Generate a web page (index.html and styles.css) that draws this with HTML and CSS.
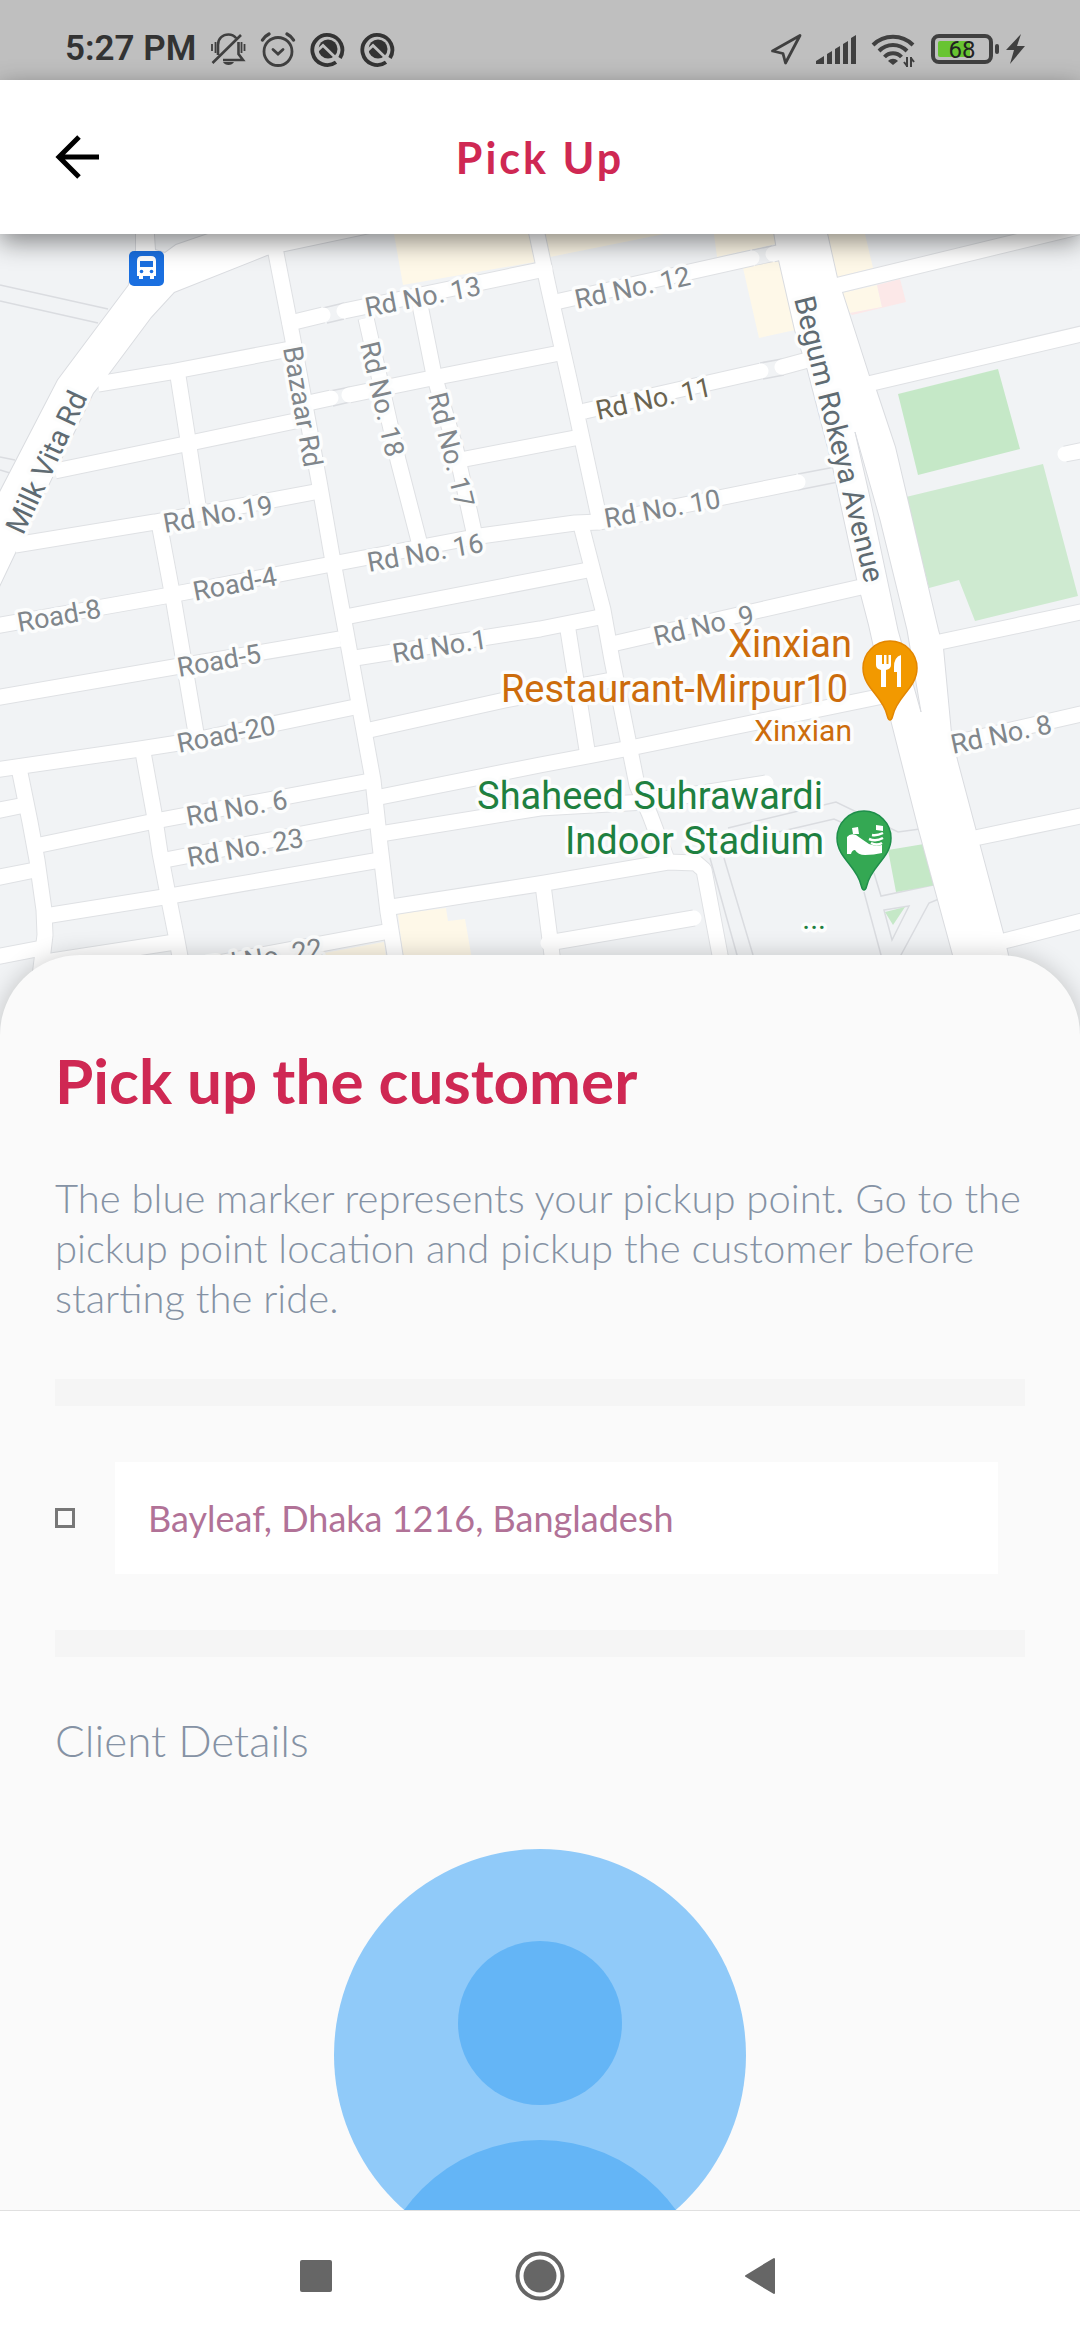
FILE: index.html
```html
<!DOCTYPE html>
<html lang="en">
<head>
<meta charset="utf-8">
<meta name="viewport" content="width=device-width">
<title>Pick Up</title>
<link rel="stylesheet" href="styles.css">
</head>
<body>
<div class="screen">
  <div class="status-bar">
    <div class="status-group">
      <span class="clock">5:27 PM</span>
      <svg class="status-icon" width="36" height="36" viewBox="0 0 36 36" fill="none" stroke="#404040" stroke-width="2.6">
        <path d="M8 24V14C8 7 13 3.500 18.500 3.500C21 3.500 24 4.500 26 7M28.500 11V23L33 29H13M31 4L2.500 32"/>
        <path d="M2 13v7M5.500 11v11M31.500 11v11M34.500 13v7" stroke-width="1.800"/>
        <path d="M13 31h11c-2 4-9 4-11 0z" fill="#404040" stroke="none"/>
      </svg>
      <svg class="status-icon" width="36" height="36" viewBox="0 0 36 36" fill="none" stroke="#404040" stroke-width="2.8" stroke-linecap="round">
        <circle cx="18" cy="20.500" r="14"/>
        <path d="M13 18.500l5 4.500l5-4.500"/>
        <path d="M2.500 9C4 6.500 6 4.500 9 3M33.500 9C32 6.500 30 4.500 27 3" stroke-width="3.400"/>
      </svg>
      <svg class="status-icon" width="36" height="36" viewBox="0 0 36 36">
        <path d="M26 31.200A15 15 0 1 1 30 27" fill="none" stroke="#333" stroke-width="3.800"/>
        <circle cx="18" cy="18" r="9.500" fill="#333"/>
        <path d="M7 20L13 14.500L29 30" fill="none" stroke="#bfbfbf" stroke-width="2.800"/>
      </svg>
      <svg class="status-icon" width="36" height="36" viewBox="0 0 36 36">
        <path d="M26 31.200A15 15 0 1 1 30 27" fill="none" stroke="#333" stroke-width="3.800"/>
        <circle cx="18" cy="18" r="9.500" fill="#333"/>
        <path d="M7 20L13 14.500L29 30" fill="none" stroke="#bfbfbf" stroke-width="2.800"/>
      </svg>
    </div>
    <div class="status-group">
      <svg width="32" height="36" viewBox="0 0 32 36" fill="none" stroke="#404040" stroke-width="2.800" stroke-linejoin="round">
        <path d="M30 4.500L2.500 20L13 22.500L15.500 32z"/>
      </svg>
      <svg width="41" height="36" viewBox="0 0 41 36" fill="#404040">
        <path d="M0 33v-3l8-5v8zM11 33V23l5-3v13zM19 33V18l5-3v18zM27 33V13l5-3v23zM35 33V7l5-3v29z"/>
      </svg>
      <svg width="44" height="36" viewBox="0 0 44 36" fill="none" stroke="#404040" stroke-width="4">
        <path d="M2 14C13 3 31 3 42 14M8 20C16 12 28 12 36 20M13.500 26C18 21 26 21 30.500 26"/>
        <path d="M17 30c3-3 7-3 10 0l-5 4z" fill="#404040" stroke="none"/>
        <path d="M36 26v10M40 26v10M33 31l3 4M43 31l-3-4" stroke-width="2"/>
      </svg>
      <div class="battery">
        <span class="battery-case"><span class="battery-level">68</span></span>
        <span class="battery-nub"></span>
        <svg width="20" height="32" viewBox="0 0 20 32" fill="#404040"><path d="M15 1L0 17h8L4 31L19 13h-8z"/></svg>
      </div>
    </div>
  </div>

  <header class="app-bar">
    <button class="back" type="button" aria-label="Back">
      <svg width="44" height="44" viewBox="0 0 44 44" fill="none" stroke="#000" stroke-width="5"><path d="M24 2L4 22L24 42M4 22H44"/></svg>
    </button>
    <h1 class="app-title">Pick Up</h1>
  </header>

  <main class="content">
    <svg class="map" viewBox="0 234 1080 801" role="img" aria-label="Map of Mirpur, Dhaka">
      <defs>
        <g id="main-roads">
          <path d="M136 220V250L129 285L58 380L0 492L-5 595L15 553L24 535L93 393L107 376L151 317L174 292L267 255L285 251L370 233V220H208V234L176 245L165 253L155 250L153 220Z"/>
          <path d="M772 220L776 244L779 260L795 330L807 367L833 467L857 579L869 625L884 692L919 830L953 955L975 1040H1030L1008 955L1003 933L957 760L951 733L943 648L938 630L895 447L876 390L869 376L842 292L837 278L824 220Z"/>
        </g>
        <g id="streets">
          <path d="M274 240L276 253L292 335L319 481L332 556L344 621L352 665L373 780L380 845L388 912L395 955L402 1010"/>
          <path d="M178 376L188 440L199 512M160 528L174 603L196 733M143 752L154 813L160 853L170 905L176 935L190 1010M19 768L30 822L37 860L44 910L45 935L36 1010"/>
          <path d="M98 384L170 372L290 349M55 471L190 443L300 420M15 545L155 522L320 491M-5 626L165 596L332 564L480 536L575 523L600 522"/>
          <path d="M-5 698L180 666L340 639M-5 770L140 749L185 742L355 707M35 846L155 821L370 781M165 860L375 820M45 916L170 896L380 860M45 962L175 942M390 931L170 972"/>
          <path d="M-5 811L25 805M-5 878L35 870M-5 957L42 948"/>
          <path d="M366 318L398 460L420 545M419 300L434 375L456 450L474 532M460 460L580 437"/>
          <path d="M535 225L549 290L570 383L600 522M581 525L603 610L612 660L629 745L637 785L650 815L667 860M568 630L587 750"/>
          <path d="M345 617L588 570M355 658L540 629L600 617M612 644L760 610L870 585M365 731L505 700L617 679M375 798L540 765L630 748L888 695"/>
          <path d="M385 908L545 883L668 862L696 863L704 870L720 955L732 1010M543 885L552 955L560 1010"/>
          <path d="M835 286L1090 224M868 384L1090 332M935 643L1090 610M950 744L1090 712M975 838L1090 814M1000 942L1090 919"/>
        </g>
        <g id="lanes">
          <path d="M290 323L323 315M344 311L545 269M308 403L331 398M349 395L432 378L560 353"/>
          <path d="M560 301L752 258M773 254L790 250M585 411L761 371M782 367L815 358M600 522L798 482"/>
          <path d="M380 834L540 808L645 802L766 783M548 943L694 918M1065 454L1095 448"/>
        </g>
      </defs>
      <rect class="land" y="234" width="1080" height="801"/>
      <g class="outline">
        <path d="M0 285L108 309M0 301L98 323M0 457L15 460M0 470L10 473M323 308L344 303M327 323L344 319M330 391L350 387M333 406L350 402M752 250L772 246M755 266L773 262M760 363L782 359M763 379L784 375M798 474L835 467M798 490L838 482"/>
        <path d="M728 828L836 802L898 832L920 829M774 833L834 819L850 826M710 858L737 955L745 985M724 858L753 955L763 985M864 892L881 955L888 985M874 873L881 896L938 884M884 910L909 906L892 940ZM939 899L929 903L901 955L890 980"/>
      </g>
      <path class="shop" d="M394 234L403 285L535 262L529 234ZM545 234L550 257L664 234ZM714 234L717 257L776 244L774 234ZM743 268L779 261L795 330L759 338ZM826 234L837 277L873 268L865 234ZM842 293L877 285L882 307L850 313ZM398 914L446 908L448 921L465 919L473 965H404ZM384 942L324 953L310 970H388Z"/>
      <path class="clinic" d="M877 285L900 279L906 302L852 315L850 313L882 307Z"/>
      <path class="park" d="M898 394L998 369L1020 449L918 475ZM888 850L924 844L935 885L896 892ZM885 912L905 907L893 925Z"/>
      <path class="field-green" d="M906 497L1043 464L1078 596L975 621L959 580L929 588Z"/>
      <use href="#streets" class="street-edge"/>
      <use href="#lanes" class="street-edge"/>
      <use href="#main-roads" class="main-edge"/>
      <use href="#streets" class="street"/>
      <use href="#lanes" class="street round"/>
      <use href="#main-roads" class="main-road"/>
      <path class="median" d="M855 432L880 520L907 630L921 712L898 630L869 493Z"/>

      <g class="label">
        <text transform="translate(367 317) rotate(-11)">Rd No. 13</text>
        <text transform="translate(577 309) rotate(-12)">Rd No. 12</text>
        <text class="dark" transform="translate(598 420) rotate(-12)">Rd No. 11</text>
        <text transform="translate(606 528) rotate(-10)">Rd No. 10</text>
        <text transform="translate(656 646) rotate(-13)">Rd No. 9</text>
        <text transform="translate(953 754) rotate(-12)">Rd No. 8</text>
        <text transform="translate(165 533) rotate(-10)">Rd No.19</text>
        <text transform="translate(369 572) rotate(-10)">Rd No. 16</text>
        <text transform="translate(195 601) rotate(-11)">Road-4</text>
        <text transform="translate(19 632) rotate(-10)">Road-8</text>
        <text transform="translate(179 677) rotate(-10)">Road-5</text>
        <text transform="translate(179 753) rotate(-11)">Road-20</text>
        <text transform="translate(394 663) rotate(-9)">Rd No.1</text>
        <text transform="translate(188 826) rotate(-10)">Rd No. 6</text>
        <text transform="translate(189 867) rotate(-10)">Rd No. 23</text>
        <text transform="translate(208 977) rotate(-10)">Rd No. 22</text>
        <text transform="translate(283 348) rotate(80)">Bazaar Rd</text>
        <text transform="translate(360 344) rotate(77)">Rd No. 18</text>
        <text transform="translate(428 395) rotate(76)">Rd No. 17</text>
        <text class="major" transform="translate(23 536) rotate(-65)">Milk Vita Rd</text>
        <text class="major" transform="translate(794 299) rotate(76)">Begum Rokeya Avenue</text>
      </g>
      <g class="poi food">
        <text x="852" y="657">Xinxian</text>
        <text x="848" y="702">Restaurant-Mirpur10</text>
        <text class="small" x="852" y="741">Xinxian</text>
      </g>
      <g class="poi sport">
        <text x="823" y="809">Shaheed Suhrawardi</text>
        <text x="824" y="854">Indoor Stadium</text>
        <text class="small" x="826" y="929">...</text>
      </g>

      <g transform="translate(890 720)">
        <path d="M0 0C-2 0-2-2-3-5C-7-24-27-32-27-52A27 27 0 0 1 27-52C27-32 7-24 3-5C2-2 2 0 0 0Z" fill="#f29900" stroke="#e38600" stroke-width="1.500"/>
        <path d="M-14-65v10q0 4 5 5v17h5v-17q5-1 5-5v-10h-2.500v9h-2v-9h-2.500v9h-2v-9zM11-65q-7 2-7 12v5h3v15h4z" fill="#fff"/>
      </g>
      <g transform="translate(864 890)">
        <path d="M0 0C-2 0-2-2-3-5C-7-24-27-32-27-52A27 27 0 0 1 27-52C27-32 7-24 3-5C2-2 2 0 0 0Z" fill="#34a853" stroke="#1e8e4a" stroke-width="1.500"/>
        <path d="M-12-62l6-1l1 7l-6 0zM12-65l7 1v5l-7-1zM-17-53q3-4 9-2q7 5 13 9q7 3 13 1v8q-8 2-17 2q-7 0-10-5q-3 0-4 4h-4z" fill="#fff"/>
        <path d="M19-57q-6 3-11 2M19-52q-7 4-14 1M18-47q-5 3-11 0" stroke="#fff" stroke-width="2.500" fill="none"/>
      </g>
      <g transform="translate(129 251)">
        <rect width="35" height="35" rx="5" fill="#1a6fe0"/>
        <path d="M8 10q0-5 5-5h9q5 0 5 5v15h-2v3h-4v-3h-7v3h-4v-3h-2z" fill="#fff"/>
        <path d="M11 10h13v6H11z" fill="#1a6fe0"/>
        <circle cx="12.500" cy="20.500" r="1.800" fill="#1a6fe0"/><circle cx="22.500" cy="20.500" r="1.800" fill="#1a6fe0"/>
      </g>
    </svg>

    <section class="sheet">
      <h2 class="sheet-title">Pick up the customer</h2>
      <p class="intro">The blue marker represents your pickup point. Go to the pickup point location and pickup the customer before starting the ride.</p>
      <div class="divider"></div>
      <div class="address-row">
        <span class="marker"></span>
        <input class="address" type="text" aria-label="Pickup address" value="Bayleaf, Dhaka 1216, Bangladesh" readonly>
      </div>
      <div class="divider"></div>
      <h3 class="client-title">Client Details</h3>
      <svg class="avatar" width="412" height="412" viewBox="0 0 412 412" role="img" aria-label="Client photo">
        <clipPath id="disc"><circle cx="206" cy="206" r="206"/></clipPath>
        <g clip-path="url(#disc)">
          <path d="M0 0h412v412H0z" fill="#90caf9"/>
          <circle cx="206" cy="174" r="82" fill="#64b5f6"/>
          <circle cx="206" cy="458" r="167" fill="#64b5f6"/>
        </g>
      </svg>
    </section>
  </main>

  <nav class="nav-bar">
    <button type="button" aria-label="Recent apps"><svg width="50" height="50" viewBox="0 0 50 50"><rect x="9" y="9" width="32" height="32" rx="2" fill="#666"/></svg></button>
    <button type="button" aria-label="Home"><svg width="50" height="50" viewBox="0 0 50 50"><circle cx="25" cy="25" r="22.500" fill="none" stroke="#666" stroke-width="4"/><circle cx="25" cy="25" r="16.500" fill="#666"/></svg></button>
    <button type="button" aria-label="Back"><svg width="50" height="50" viewBox="0 0 50 50"><path d="M7 25L35 8V42Z" fill="#666" stroke="#666" stroke-width="2" stroke-linejoin="round"/></svg></button>
  </nav>
</div>
</body>
</html>
```
FILE: styles.css
```css
* {
  box-sizing: border-box;
}

body {
  margin: 0;
  background: #fafafa;
  font-family: Lato, "Liberation Sans", sans-serif;
}

button {
  padding: 0;
  border: 0;
  background: none;
}

svg {
  display: block;
}

.screen {
  display: flex;
  flex-direction: column;
  height: 100vh;
}

/* System status bar */
.status-bar {
  display: flex;
  justify-content: space-between;
  align-items: center;
  height: 80px;
  padding: 18px 54px 0 65px;
  background: #bfbfbf;
  color: #333;
  font-family: Roboto, sans-serif;
}

.status-group {
  display: flex;
  align-items: center;
  gap: 14px;
}

.clock {
  font-size: 35px;
  font-weight: 600;
  line-height: 40px;
}

.battery {
  display: flex;
  align-items: center;
  gap: 2px;
  margin-left: 2px;
}

.battery-case {
  display: block;
  width: 62px;
  height: 30px;
  padding: 3px;
  border: 4px solid #404040;
  border-radius: 8px;
}

.battery-level {
  display: block;
  height: 16px;
  border-radius: 2px;
  background: linear-gradient(90deg, #68c431 66%, transparent 66%);
  color: #222;
  font-size: 24px;
  line-height: 18px;
  text-align: center;
}

.battery-nub {
  width: 4px;
  height: 10px;
  margin-right: 5px;
  border-radius: 2px;
  background: #404040;
}

/* App bar */
.app-bar {
  position: relative;
  z-index: 1;
  display: grid;
  grid-template-columns: 44px 1fr 44px;
  align-items: center;
  height: 154px;
  padding: 0 55px;
  background: #fff;
  box-shadow: 0 8px 24px rgba(0, 0, 0, 0.45);
}

.app-title {
  margin: 0;
  color: #cf2853;
  font-size: 43px;
  font-weight: 700;
  letter-spacing: 3px;
  text-align: center;
}

.content {
  flex: 1;
  min-height: 0;
  overflow: hidden;
}

/* Map */
.map {
  width: 100%;
  height: auto;
  font-family: Roboto, sans-serif;
}

.land {
  fill: #f1f3f5;
}

.outline {
  fill: none;
  stroke: #dadce0;
  stroke-width: 1.5;
}

.shop {
  fill: #fef8e8;
}

.clinic {
  fill: #fce8e8;
}

.park {
  fill: #c5e8c7;
}

.field-green {
  fill: #ceead0;
}

.street-edge,
.street {
  fill: none;
  stroke-linejoin: round;
}

.street-edge {
  stroke: #dfe1e4;
  stroke-width: 17px;
}

.street {
  stroke: #fff;
  stroke-width: 15px;
}

.round {
  stroke-linecap: round;
}

.main-edge {
  fill: #fff;
  stroke: #dadce0;
  stroke-width: 2px;
}

.main-road {
  fill: #fff;
}

.median {
  fill: #f1f3f5;
  stroke: #dadce0;
}

.label text,
.poi text {
  paint-order: stroke;
  stroke: #fcfdfd;
  stroke-width: 7px;
  stroke-linejoin: round;
}

.label text {
  fill: #80868b;
  font-size: 27px;
}

.label .dark {
  fill: #6b6450;
}

.label .major {
  fill: #5f6b72;
  font-size: 29px;
}

.poi text {
  font-size: 38px;
  text-anchor: end;
}

.poi .small {
  font-size: 30px;
}

.food {
  fill: #cc6c0c;
}

.sport {
  fill: #1e8040;
}

/* Bottom sheet */
.sheet {
  position: relative;
  display: flex;
  flex-direction: column;
  gap: 56px;
  margin-top: -80px;
  padding: 88px 55px 0;
  border-radius: 80px 80px 0 0;
  background: #fafafa;
  box-shadow: 0 0 24px rgba(0, 0, 0, 0.2);
}

.sheet-title,
.client-title,
.intro {
  margin: 0;
}

.sheet-title {
  color: #cf2853;
  font-size: 62px;
  font-weight: 700;
  line-height: 74px;
}

.intro {
  color: #8592a4;
  font-size: 40px;
  font-weight: 300;
  line-height: 50px;
}

.divider {
  height: 27px;
  background: #f5f5f5;
}

.address-row {
  display: flex;
  align-items: center;
  gap: 40px;
  padding-right: 27px;
}

.marker {
  width: 20px;
  height: 20px;
  border: 3px solid #777;
}

.address {
  flex: 1;
  min-width: 0;
  height: 112px;
  padding: 0 33px;
  border: 0;
  background: #fff;
  color: #b17297;
  font-family: inherit;
  font-size: 36px;
}

.client-title {
  color: #8592a4;
  font-size: 44px;
  font-weight: 300;
  line-height: 54px;
}

.avatar {
  align-self: center;
  margin-top: 26px;
}

/* System navigation */
.nav-bar {
  display: flex;
  justify-content: center;
  height: 130px;
  border-top: 1px solid #e0e0e0;
  background: #fff;
}

.nav-bar button {
  display: grid;
  place-items: center;
  width: 224px;
}
```
